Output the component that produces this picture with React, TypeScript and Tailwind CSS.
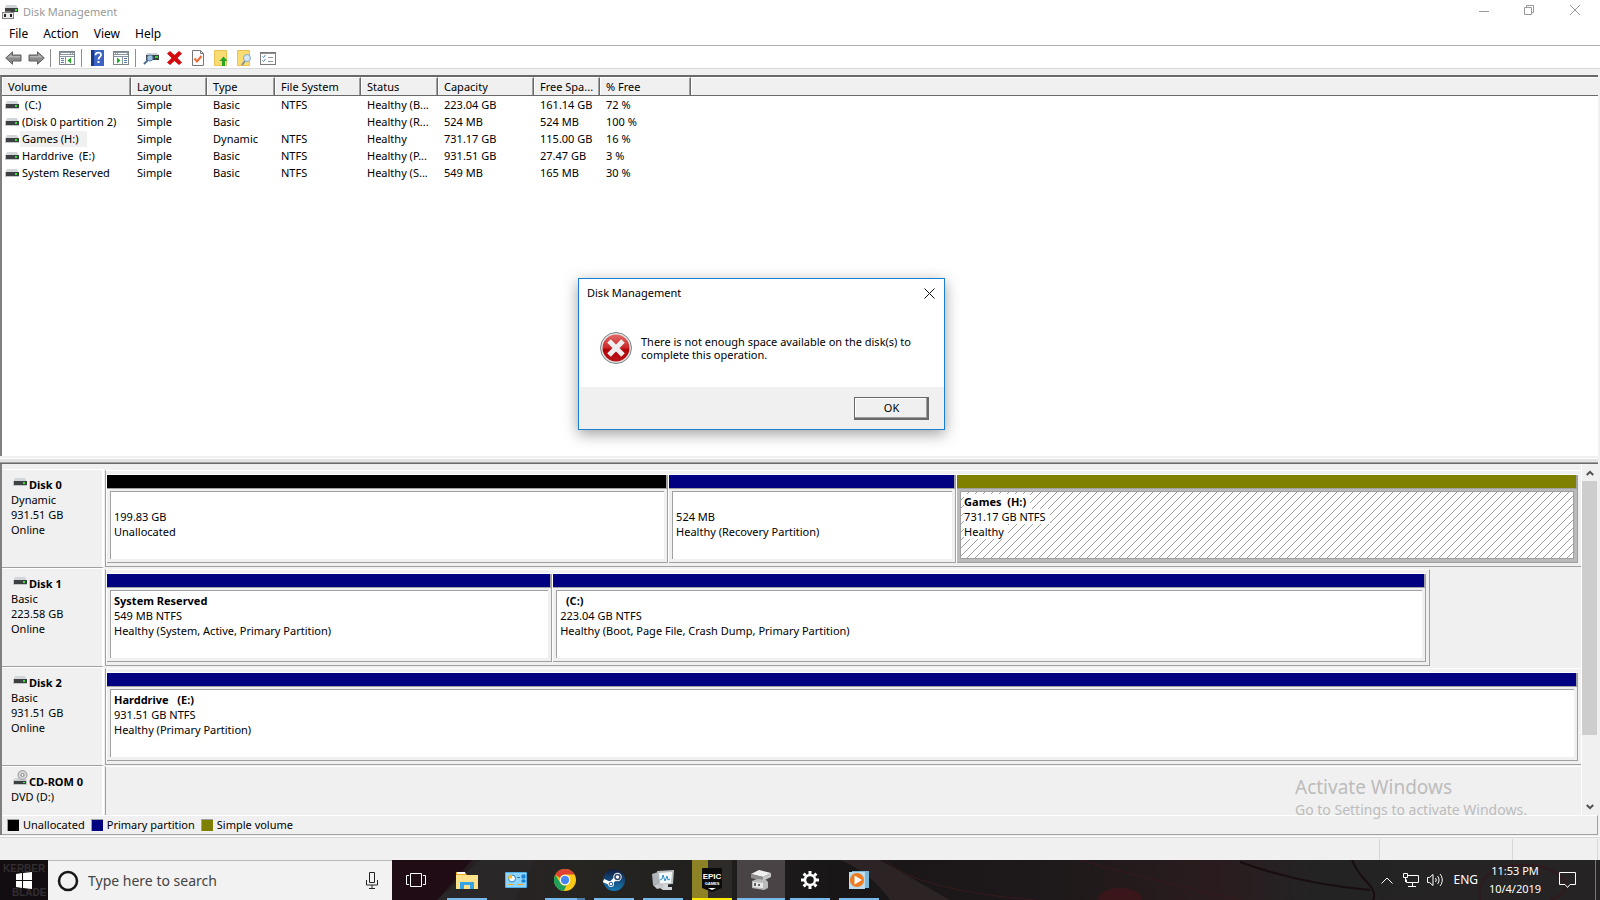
import React from "react";

const columns = [
  { title: "Volume", width: "w-[129px]" },
  { title: "Layout", width: "w-[76px]" },
  { title: "Type", width: "w-[68px]" },
  { title: "File System", width: "w-[86px]" },
  { title: "Status", width: "w-[77px]" },
  { title: "Capacity", width: "w-[96px]" },
  { title: "Free Spa...", width: "w-[66px]" },
  { title: "% Free", width: "w-[91px]" },
];

const volumes = [
  { name: " (C:)", cells: ["Simple", "Basic", "NTFS", "Healthy (B...", "223.04 GB", "161.14 GB", "72 %"] },
  { name: "(Disk 0 partition 2)", cells: ["Simple", "Basic", "", "Healthy (R...", "524 MB", "524 MB", "100 %"] },
  { name: "Games (H:)", selected: true, cells: ["Simple", "Dynamic", "NTFS", "Healthy", "731.17 GB", "115.00 GB", "16 %"] },
  { name: "Harddrive  (E:)", cells: ["Simple", "Basic", "NTFS", "Healthy (P...", "931.51 GB", "27.47 GB", "3 %"] },
  { name: "System Reserved", cells: ["Simple", "Basic", "NTFS", "Healthy (S...", "549 MB", "165 MB", "30 %"] },
];

const disks = [
  {
    name: "Disk 0",
    info: ["Dynamic", "931.51 GB", "Online"],
    full: true,
    parts: [
      { title: " ", lines: ["199.83 GB", "Unallocated"], bar: "bg-black", grow: "grow-[563]" },
      { title: " ", lines: ["524 MB", "Healthy (Recovery Partition)"], bar: "bg-[#000080]", grow: "grow-[288]" },
      { title: "Games  (H:)", lines: ["731.17 GB NTFS", "Healthy"], bar: "bg-[#808000]", grow: "grow-[623]", selected: true },
    ],
  },
  {
    name: "Disk 1",
    info: ["Basic", "223.58 GB", "Online"],
    full: false,
    parts: [
      { title: "System Reserved", lines: ["549 MB NTFS", "Healthy (System, Active, Primary Partition)"], bar: "bg-[#000080]", grow: "grow-[446]" },
      { title: "  (C:)", lines: ["223.04 GB NTFS", "Healthy (Boot, Page File, Crash Dump, Primary Partition)"], bar: "bg-[#000080]", grow: "grow-[874]" },
    ],
  },
  {
    name: "Disk 2",
    info: ["Basic", "931.51 GB", "Online"],
    full: true,
    parts: [
      { title: "Harddrive   (E:)", lines: ["931.51 GB NTFS", "Healthy (Primary Partition)"], bar: "bg-[#000080]", grow: "grow" },
    ],
  },
];

const legend = [
  { label: "Unallocated", color: "bg-black" },
  { label: "Primary partition", color: "bg-[#000080]" },
  { label: "Simple volume", color: "bg-[#808000]" },
];

const DriveIcon = () => (
  <svg width="14" height="8" viewBox="0 0 14 8" className="shrink-0">
    <path d="M2 0h10l2 4H0z" fill="#d3d6d9" />
    <rect y="3" width="14" height="5" fill="#c3c6c9" />
    <rect x="1" y="3" width="13" height="4" fill="#3c4043" />
    <rect x="10" y="4" width="2" height="2" fill="#2fe62f" />
  </svg>
);

const CdIcon = () => (
  <svg width="15" height="15" viewBox="0 0 15 15" className="shrink-0">
    <path d="M2 8h10l2 3H0z" fill="#d3d6d9" />
    <circle cx="9.500" cy="5" r="4.500" fill="#d4d4d4" stroke="#9c9c9c" />
    <circle cx="9.500" cy="5" r="1.500" fill="#fff" stroke="#8a8a8a" />
    <rect y="10" width="14" height="5" fill="#c3c6c9" />
    <rect x="1" y="11" width="12" height="3" fill="#3c4043" />
    <rect x="10" y="12" width="2" height="1" fill="#3df53d" />
  </svg>
);

const AppIcon = () => (
  <svg width="16" height="16" viewBox="0 0 16 16">
    <path d="M4 1h10l2 3H3z" fill="#d0d3d6" />
    <rect x="3" y="4" width="13" height="4" fill="#3c4043" />
    <rect x="13" y="5" width="2" height="2" fill="#3df53d" />
    <rect x="3" y="7" width="6" height="2" fill="#777" />
    <rect x="0" y="8" width="12" height="7" fill="#858585" />
    <rect x="1" y="9" width="10" height="5" fill="#ececec" />
    <rect x="2" y="10" width="2" height="3" fill="#222" />
    <rect x="8" y="10" width="2" height="3" fill="#222" />
  </svg>
);

const ArrowIcon = ({ flip = false }: { flip?: boolean }) => (
  <svg width="17" height="14" viewBox="0 0 17 14" className={flip ? "-scale-x-100" : ""}>
    <path d="M.7 7 7.500.8V4H16v6H7.500v3.200z" fill="#8b8b8b" stroke="#5f5f5f" />
    <path d="M2.500 6.500 6.500 3v2H15v1.500z" fill="#b4b4b4" />
  </svg>
);

const PaneIcon = ({ flip = false }: { flip?: boolean }) => (
  <svg width="16" height="14" viewBox="0 0 16 14" className={flip ? "-scale-x-100" : ""}>
    <rect x=".5" y=".5" width="15" height="13" fill="#fff" stroke="#7d848b" />
    <path d="M1 1h14v3H1z" fill="#8b959f" />
    <path d="M2 2.500h9M12 2.500h1M14 2.500h1" stroke="#fff" />
    <path d="M1 5.500h14M6.500 5v8" stroke="#8b959f" />
    <path d="M2 7.500h3M2 9.500h3M2 11.500h3" stroke="#5a7ba0" />
    <path d="M12 6.500v6L8.500 9.500z" fill="#1fae1f" />
  </svg>
);

const HelpIcon = () => (
  <svg width="13" height="16" viewBox="0 0 13 16">
    <rect width="13" height="16" fill="#3c62c4" />
    <rect width="3" height="16" fill="#1d3888" />
    <path d="M4.500 5.200c0-3.600 5.500-3.200 5.500-.3 0 2-2.500 2.200-2.500 4.600" fill="none" stroke="#fff" strokeWidth="1.800" />
    <rect x="6.500" y="11" width="2" height="2" fill="#fff" />
  </svg>
);

const ScanIcon = () => (
  <svg width="16" height="14" viewBox="0 0 16 14">
    <path d="M4 2h10l2 2H3z" fill="#cfd2d5" />
    <rect x="3" y="4" width="13" height="5" fill="#3c4043" />
    <rect x="12" y="5" width="3" height="2" fill="#2edc2e" />
    <path d="m1 13 4-4" stroke="#4b6d8e" strokeWidth="2" />
    <circle cx="7" cy="7" r="3" fill="#9dc1de" stroke="#557da3" />
  </svg>
);

const DeleteIcon = () => (
  <svg width="15" height="14" viewBox="0 0 15 14">
    <path d="m0 2.500 3-2.500 4.500 4L12 0l3 2.500L10.500 7l4.500 4.500-3 2.500-4.500-4L3 14l-3-2.500L4.500 7z" fill="#d4070c" />
  </svg>
);

const CheckPageIcon = () => (
  <svg width="12" height="16" viewBox="0 0 12 16">
    <path d="M.5.5h8l3 3v12H.5z" fill="#fbfbfb" stroke="#777" />
    <path d="M8.500.5v3h3" fill="none" stroke="#777" />
    <path d="m2.500 8.500 2.500 3L9.500 6" fill="none" stroke="#ef6a32" strokeWidth="2" />
  </svg>
);

const FolderUpIcon = () => (
  <svg width="14" height="16" viewBox="0 0 14 16">
    <path d="M.5.500h12v15H.5z" fill="#fbdc72" stroke="#e8c252" />
    <path d="M9.500 6.500 13.500 11H11v5H8v-5H5.500z" fill="#28a428" />
  </svg>
);

const FolderFindIcon = () => (
  <svg width="15" height="16" viewBox="0 0 15 16">
    <path d="M.5.500h12v15H.5z" fill="#fbdc72" stroke="#e8c252" />
    <path d="m5 15 3-4" stroke="#87919b" strokeWidth="2" />
    <circle cx="10" cy="8" r="3.500" fill="#d4e8f7" stroke="#8aa9c4" />
  </svg>
);

const ListIcon = () => (
  <svg width="16" height="13" viewBox="0 0 16 13">
    <rect x=".5" y=".5" width="15" height="12" fill="#fff" stroke="#7c7c7c" />
    <path d="M1 1.500h14" stroke="#8c8c8c" />
    <path d="m2.500 4.500 1 1 2-2.500M2.500 8.500l1 1 2-2.500" fill="none" stroke="#3a86d0" />
    <path d="M8 5.500h5M8 9.500h5" stroke="#999" />
  </svg>
);

const Separator = () => <span className="h-[18px] w-px bg-[#8f8f8f]" />;

const ToolButton = ({ label, children }: { label: string; children: React.ReactNode }) => (
  <button aria-label={label} className="flex h-5 w-[23px] items-center justify-center">
    {children}
  </button>
);

const TitleBar = () => (
  <header className="flex h-6 items-center bg-white pl-[2px] text-[#999]">
    <AppIcon />
    <h1 className="ml-[5px] grow">Disk Management</h1>
    <button aria-label="Minimize" className="flex h-full w-[45px] items-center justify-center pb-[3px]">
      <svg width="10" height="10" viewBox="0 0 10 10"><path d="M0 5.500h10" stroke="#999" /></svg>
    </button>
    <button aria-label="Restore" className="flex h-full w-[46px] items-center justify-center pb-1">
      <svg width="10" height="10" viewBox="0 0 10 10" fill="none" stroke="#999">
        <path d="M.5 2.500h7v7h-7zM2.500 2.500v-2h7v7h-2" />
      </svg>
    </button>
    <button aria-label="Close" className="mr-[2px] flex h-full w-[46px] items-center justify-center pb-1">
      <svg width="10" height="10" viewBox="0 0 10 10"><path d="m0 0 10 10M10 0 0 10" stroke="#999" /></svg>
    </button>
  </header>
);

const MenuBar = () => (
  <nav className="flex h-[22px] items-start gap-[15px] border-b border-[#b0b0b8] bg-white pl-[9px] text-xs leading-5">
    {["File", "Action", "View", "Help"].map((item) => (
      <button key={item}>{item}</button>
    ))}
  </nav>
);

const Toolbar = () => (
  <div className="flex h-[23px] items-end border-b border-[#d9d9d9] bg-white pl-[2px]">
    <ToolButton label="Back"><ArrowIcon /></ToolButton>
    <ToolButton label="Forward"><ArrowIcon flip /></ToolButton>
    <span className="mr-1 ml-[2px] flex pb-px"><Separator /></span>
    <ToolButton label="Show console tree"><PaneIcon /></ToolButton>
    <span className="mr-1 ml-[3px] flex pb-px"><Separator /></span>
    <ToolButton label="Help"><HelpIcon /></ToolButton>
    <ToolButton label="Show action pane"><PaneIcon flip /></ToolButton>
    <span className="mx-[3px] flex pb-px"><Separator /></span>
    <ToolButton label="Rescan disks"><ScanIcon /></ToolButton>
    <div className="ml-px flex">
      <ToolButton label="Delete"><DeleteIcon /></ToolButton>
      <ToolButton label="Check"><CheckPageIcon /></ToolButton>
      <ToolButton label="Open"><FolderUpIcon /></ToolButton>
    </div>
    <div className="ml-px flex">
      <ToolButton label="Explore"><FolderFindIcon /></ToolButton>
      <ToolButton label="Properties"><ListIcon /></ToolButton>
    </div>
  </div>
);

const VolumeTable = () => (
  <section className="mt-[6px] mr-[2px] min-h-[100px] grow border-t-2 border-l-2 border-t-[#696969] border-l-[#808080] bg-white">
    <table className="w-full table-fixed border-separate border-spacing-0 text-left">
      <thead>
        <tr className="h-[19px] bg-[#f0f0f0] leading-4">
          {columns.map((col) => (
            <th
              key={col.title}
              className={`${col.width} border-t border-r border-b border-t-white border-r-[#696969] border-b-[#696969] p-0 pl-[6px] font-normal whitespace-nowrap shadow-[inset_-1px_0_#a0a0a0,inset_1px_0_#fff]`}
            >
              {col.title}
            </th>
          ))}
          <th className="border-t border-b border-t-white border-b-[#696969] p-0 shadow-[inset_1px_0_#fff]" />
        </tr>
      </thead>
      <tbody>
        {volumes.map((volume) => (
          <tr key={volume.name} className="h-[17px] leading-4">
            <td className="p-0 pl-[3px]">
              <div className="flex items-center whitespace-pre">
                <DriveIcon />
                <span className={volume.selected ? "ml-px bg-[#f0f0f0] pr-2 pl-[2px]" : "pl-[3px]"}>{volume.name}</span>
              </div>
            </td>
            {volume.cells.map((cell, i) => (
              <td key={i} className="p-0 pl-[6px] whitespace-nowrap">{cell}</td>
            ))}
            <td />
          </tr>
        ))}
      </tbody>
    </table>
  </section>
);

type Part = { title: string; lines: string[]; bar: string; grow: string; selected?: boolean };

const Partition = ({ part }: { part: Part }) => (
  <div className={`${part.grow} flex basis-0 flex-col border-t border-l border-white`}>
    <div className={`${part.bar} h-[14px] shrink-0 border-r-2 border-b border-[#a0a0a0]`} />
    <div
      className={`grow border-r border-b border-[#a0a0a0] px-[3px] pt-[2px] pb-[3px] ${part.selected ? "bg-[#bababa]" : "bg-[#f0f0f0]"}`}
    >
      <div
        className={
          part.selected
            ? "flex h-full flex-col items-start border border-[#a0a0a0] bg-white bg-[linear-gradient(135deg,#a0a0a0_5%,transparent_5%,transparent_45%,#a0a0a0_45%,#a0a0a0_55%,transparent_55%,transparent_95%,#a0a0a0_95%)] bg-[size:8px_8px] pt-[2px] pl-[3px] leading-[15px]"
            : "flex h-full flex-col items-start border-t border-l border-[#a0a0a0] bg-white pt-[2px] pl-[3px] leading-[15px]"
        }
      >
        <strong className={part.selected ? "bg-white pr-1 whitespace-pre" : "whitespace-pre"}>{part.title}</strong>
        {part.lines.map((line) => (
          <span key={line} className={part.selected ? "bg-white pr-1" : ""}>{line}</span>
        ))}
      </div>
    </div>
  </div>
);

const DiskMap = () => (
  <section className="mr-[2px] border-l-2 border-[#808080]">
    <div className="flex h-[351px]">
      <div className="flex min-w-0 grow flex-col overflow-hidden border-r border-white pt-[5px]">
        {disks.map((disk) => (
          <div key={disk.name} className="flex h-[99px] shrink-0">
            <div className="mr-px w-[102px] shrink-0 border-t border-r-2 border-b border-t-white border-r-white border-b-[#a0a0a0] pt-[7px] pl-[9px] leading-[15px]">
              <h2 className="flex items-start gap-[2px] pl-[2px] font-bold">
                <span className="pt-px"><DriveIcon /></span>
                {disk.name}
              </h2>
              {disk.info.map((line) => (
                <p key={line}>{line}</p>
              ))}
            </div>
            <div className="flex min-w-0 grow border-b border-[#f0f0f0]">
              <div
                className={`mt-px flex grow-[1324] basis-0 border-t border-b border-l border-t-white border-b-[#a0a0a0] border-l-[#a0a0a0] py-[3px] pr-[3px] ${disk.full ? "" : "border-r border-r-[#a0a0a0]"}`}
              >
                {disk.parts.map((part) => (
                  <Partition key={part.title + part.lines[0]} part={part} />
                ))}
              </div>
              {!disk.full && <div className="grow-[152] basis-0" />}
            </div>
          </div>
        ))}
        <div className="flex grow">
          <div className="mr-px w-[102px] shrink-0 border-t border-r-2 border-white pt-[3px] pl-[9px] leading-[15px]">
            <h2 className="flex items-start gap-px pl-[2px] font-bold">
              <CdIcon />
              <span className="pt-1">CD-ROM 0</span>
            </h2>
            <p>DVD (D:)</p>
          </div>
          <div className="grow border-t border-l border-t-white border-l-[#a0a0a0]" />
        </div>
      </div>
      <div className="flex w-4 flex-col pr-px">
        <button aria-label="Scroll up" className="flex h-[17px] items-center justify-center">
          <svg width="8" height="6" viewBox="0 0 8 6"><path d="m.8 5 3.200-3.200L7.200 5" fill="none" stroke="#505050" strokeWidth="2" /></svg>
        </button>
        <div className="h-[254px] bg-[#cdcdcd]" />
        <button aria-label="Scroll down" className="mt-auto flex h-[17px] items-center justify-center">
          <svg width="8" height="6" viewBox="0 0 8 6"><path d="m.8 1 3.200 3.200L7.200 1" fill="none" stroke="#505050" strokeWidth="2" /></svg>
        </button>
      </div>
    </div>
    <ul className="flex h-5 items-center gap-[6px] border-t border-r border-b border-t-white border-r-[#a0a0a0] border-b-[#a0a0a0] pl-[5px]">
      {legend.map((item) => (
        <li key={item.label} className="flex items-center gap-1">
          <span className={`${item.color} size-3 border-t border-l border-[#a0a0a0]`} />
          {item.label}
        </li>
      ))}
    </ul>
  </section>
);

const ErrorDialog = () => (
  <div
    role="alertdialog"
    aria-label="Disk Management"
    className="absolute top-[278px] left-[578px] w-[367px] border border-[#1a7fd1] bg-white shadow-[0_4px_14px_rgba(0,0,0,0.38)]"
  >
    <div className="flex h-7 items-center justify-between pl-2">
      <h2>Disk Management</h2>
      <button aria-label="Close" className="flex h-full w-[30px] items-center justify-center">
        <svg width="11" height="11" viewBox="0 0 11 11"><path d="m.5.5 10 10M10.500.5l-10 10" stroke="#111" /></svg>
      </button>
    </div>
    <div className="flex h-20 items-start gap-[9px] pt-[25px] pl-[21px]">
      <svg width="32" height="32" viewBox="0 0 32 32" className="shrink-0">
        <defs>
          <linearGradient id="err" x1="0" y1="0" x2="0" y2="1">
            <stop offset="0" stopColor="#e26a66" />
            <stop offset=".5" stopColor="#c9282a" />
            <stop offset=".55" stopColor="#b30509" />
            <stop offset="1" stopColor="#b81418" />
          </linearGradient>
        </defs>
        <circle cx="16" cy="16" r="15.500" fill="#e4e4e4" stroke="#7b8585" />
        <circle cx="16" cy="16" r="13.500" fill="url(#err)" />
        <path d="m9 9 14 14M23 9 9 23" stroke="#eee" strokeWidth="5" />
      </svg>
      <p className="w-[275px] pt-[3px] leading-[13px] whitespace-nowrap">
        There is not enough space available on the disk(s) to<br />complete this operation.
      </p>
    </div>
    <div className="flex h-[42px] items-start justify-end bg-[#f0f0f0] pt-[10px] pr-[15px]">
      <button className="h-[23px] w-[75px] border border-[#696969] shadow-[inset_-1px_-1px_#696969,inset_-2px_-2px_#a0a0a0,inset_1px_1px_#fff]">
        OK
      </button>
    </div>
  </div>
);

const ExplorerIcon = () => (
  <svg width="22" height="19" viewBox="0 0 22 19">
    <path d="M0 1h9l2 3h10v14H0z" fill="#e8a91d" />
    <path d="M1 1h8v2H1z" fill="#fff" />
    <path d="M0 4h22v14H0z" fill="#fce08a" />
    <path d="M4 18v-7h14v7h-4v-4H8v4z" fill="#35a4e4" />
  </svg>
);

const ControlPanelIcon = () => (
  <svg width="22" height="16" viewBox="0 0 22 16">
    <rect width="22" height="16" rx="1" fill="#4fb0ea" />
    <rect x="1" y="1" width="20" height="14" fill="#8fd4fb" />
    <circle cx="7" cy="6.500" r="3.500" fill="#fff" stroke="#1d82cf" />
    <path d="M7 6.500V2.500a4 4 0 0 0-4 4z" fill="#f7b733" />
    <path d="M12 5.500h3M17 3h3v3h-3zM17 8h3v2h-3z" fill="#1d82cf" stroke="#1d82cf" />
    <path d="M3 12.500h6M12 12.500h7" stroke="#f7a823" />
  </svg>
);

const ChromeIcon = () => (
  <svg width="22" height="22" viewBox="0 0 22 22">
    <circle cx="11" cy="11" r="11" fill="#fbc916" />
    <path d="M11 0a11 11 0 0 1 9.600 5.600H11a5.400 5.400 0 0 0-5 3.400L1.400 5.500A11 11 0 0 1 11 0z" fill="#df4132" />
    <path d="M1.400 5.500 6 13.500a5.400 5.400 0 0 0 6.500 2.800L9.800 22A11 11 0 0 1 1.400 5.500z" fill="#1fa05a" />
    <circle cx="11" cy="11" r="5.200" fill="#fff" />
    <circle cx="11" cy="11" r="4.200" fill="#4587f2" />
  </svg>
);

const SteamIcon = () => (
  <svg width="22" height="22" viewBox="0 0 22 22">
    <defs>
      <linearGradient id="steam" x1="0" y1="0" x2="0" y2="1">
        <stop offset="0" stopColor="#121b3d" />
        <stop offset="1" stopColor="#1879b5" />
      </linearGradient>
    </defs>
    <circle cx="11" cy="11" r="11" fill="url(#steam)" />
    <path d="m.5 11.500 6.500 3M7 15l7-7" stroke="#fff" strokeWidth="3.500" />
    <circle cx="14.500" cy="8" r="4.200" fill="#fff" />
    <circle cx="14.500" cy="8" r="2.500" fill="none" stroke="#31476f" strokeWidth="1.500" />
    <circle cx="8" cy="15" r="3" fill="#fff" />
    <circle cx="8" cy="15" r="1.800" fill="none" stroke="#2a5a8c" />
  </svg>
);

const MonitorIcon = () => (
  <svg width="24" height="22" viewBox="0 0 24 22">
    <path d="m1 5 6-2 1 12-6 1z" fill="#aeb4b8" />
    <path d="m2 16 9-2 3 4-8 2z" fill="#c7cacc" />
    <path d="m6 2 17-1-1 14-14 1z" fill="#b9bec1" />
    <path d="m8 4 13-1-1 11-11 .5z" fill="#f4f8fa" />
    <path d="m9 11 2-1 1-4 2 6 2-5 1 4 2-1" fill="none" stroke="#2c8ecf" />
    <path d="M12 15h5v3h4v3h-9l-3-2 3-1z" fill="#d2d5d7" />
  </svg>
);

const EpicIcon = () => (
  <svg width="20" height="24" viewBox="0 0 20 24">
    <path d="M0 1a1 1 0 0 1 1-1h18a1 1 0 0 1 1 1v19l-10 4-10-4z" fill="#0b0b0b" />
    <text x="10" y="11" fill="#fff" fontSize="8" fontWeight="700" textAnchor="middle" fontFamily="Liberation Sans Narrow, Liberation Sans, sans-serif">EPIC</text>
    <text x="10" y="17" fill="#fff" fontSize="4" fontWeight="700" textAnchor="middle" fontFamily="Liberation Sans, sans-serif">GAMES</text>
    <path d="M6 20h8l-4 2z" fill="#fff" />
  </svg>
);

const DiskTaskIcon = () => (
  <svg width="24" height="20" viewBox="0 0 24 20">
    <path d="m2 4 8-4 12 3-8 4z" fill="#f0f0f0" />
    <path d="m2 4 12 3v4L2 8z" fill="#8c8c8c" />
    <path d="m14 7 8-4v4l-8 4z" fill="#c6c6c6" />
    <path d="m3 11 5-2 9 1 2 2v6l-4 2-12-2z" fill="#b9b9b9" />
    <path d="m4 12 10 1v5L4 17z" fill="#e8e8e8" />
    <path d="M6 13v3M10 14v2" stroke="#333" strokeWidth="1.500" />
  </svg>
);

const GearIcon = () => (
  <svg width="18" height="18" viewBox="0 0 18 18" fill="none" stroke="#fff">
    <circle cx="9" cy="9" r="5" strokeWidth="2.500" />
    <path d="M9 0v3M9 15v3M0 9h3M15 9h3M2.600 2.600l2.200 2.200M13.200 13.200l2.200 2.200M2.600 15.400l2.200-2.200M13.200 4.800l2.200-2.200" strokeWidth="3" />
  </svg>
);

const MediaIcon = () => (
  <svg width="20" height="18" viewBox="0 0 20 18">
    <path d="M3 0h17v17H3z" fill="#7fb6d6" />
    <path d="M0 1h16v17H0z" fill="#b9dcee" />
    <circle cx="8" cy="9" r="7" fill="#ee7a1d" />
    <path d="m5.500 4.500 7.500 4.500-7.500 4.500z" fill="#fff" />
  </svg>
);

const tasks = [
  { label: "File Explorer", icon: <ExplorerIcon />, line: "bg-[#76b9ed]", back: "" },
  { label: "Control Panel", icon: <ControlPanelIcon />, line: "", back: "" },
  { label: "Google Chrome", icon: <ChromeIcon />, line: "bg-[linear-gradient(90deg,#76b9ed_80%,#4e7ea6_80%)]", back: "" },
  { label: "Steam", icon: <SteamIcon />, line: "bg-[#76b9ed]", back: "" },
  { label: "Resource Monitor", icon: <MonitorIcon />, line: "bg-[#76b9ed]", back: "" },
  { label: "Epic Games", icon: <EpicIcon />, line: "bg-[#ffeb00]", back: "bg-[linear-gradient(90deg,#8d8326_40%,#2e2a28_40%)]" },
  { label: "Disk Management", icon: <DiskTaskIcon />, line: "bg-[#76b9ed]", back: "bg-[#4a4346]", active: true },
  { label: "Settings", icon: <GearIcon />, line: "bg-[#76b9ed]", back: "" },
  { label: "Media Player", icon: <MediaIcon />, line: "bg-[#76b9ed]", back: "" },
];

// wallpaper showing faintly through the taskbar
const TaskbarArt = () => (
  <svg className="absolute inset-0 size-full" viewBox="0 0 1600 40" preserveAspectRatio="none" fill="none">
    <path d="M392 0h80l-35 40h-45z" fill="#1f0c14" />
    <path d="M437 40 480 0h55l-20 40z" fill="#2a2729" />
    <path d="M840 0q30 12 50 40h60L880 0z" fill="#2b2324" />
    <path d="M885 0q30 30 150 40M1080 0q70 20 160 40" stroke="#38191d" />
    <path d="M1240 2q60 22 130 28M1352 0q5 12 15 22t6 18" stroke="#190d10" strokeWidth="2" />
    <ellipse cx="1120" cy="40" rx="22" ry="12" fill="#3a161b" />
    <path d="M1480 40q-4-30 30-34t50 10-10 24" stroke="#301a1d" strokeWidth="2" />
  </svg>
);

const Taskbar = () => (
  <footer className="relative h-10 shrink-0 bg-[linear-gradient(90deg,#140a0e_0,#140a0e_24%,#272123_30%,#262522_36%,#21201e_44%,#191617_52%,#1e191a_66%,#2a1c1e_76%,#242324_82%,#262324_100%)] text-white">
    <TaskbarArt />
    <div className="relative flex h-full">
      <button aria-label="Start" className="flex w-12 items-center justify-center bg-[#120d10]">
        <svg width="48" height="40" viewBox="0 0 48 40">
          <g fill="#322e32" fontFamily="Liberation Sans, sans-serif" fontWeight="700">
            <text x="3" y="12" fontSize="10">KERBER</text>
            <text x="12" y="36" fontSize="10">BLADE</text>
          </g>
          <path d="m16 14 6-1v7h-6zM23 13l9-1v8h-9zM16 21h6v7l-6-1zM23 21h9v8l-9-1z" fill="#fff" />
        </svg>
      </button>
      <label className="flex w-[344px] items-center border-t border-[#b9b9b9] bg-[#f2f2f2] pr-[14px] pl-[9px]">
        <svg width="22" height="22" viewBox="0 0 22 22" className="mr-[9px] shrink-0">
          <circle cx="11" cy="11" r="9" fill="none" stroke="#161616" strokeWidth="2.500" />
        </svg>
        <input
          type="text"
          aria-label="Search"
          placeholder="Type here to search"
          className="min-w-0 grow bg-transparent text-sm text-[#444] outline-none placeholder:text-[#444]"
        />
        <svg width="12" height="17" viewBox="0 0 12 17" fill="none" stroke="#222">
          <path d="M3.500.5h5v10h-5zM.500 8v5h11V8M6 13v3.500M3 16.500h6" />
        </svg>
      </label>
      <button aria-label="Task view" className="mr-[2px] flex w-12 items-center justify-center">
        <svg width="20" height="14" viewBox="0 0 20 14" fill="none" stroke="#fff">
          <path d="M4.500.5h11v13h-11zM3 2.500H.5v9H3M17 2.500h2.500v9H17" />
        </svg>
      </button>
      {tasks.map((task) => (
        <button key={task.label} aria-label={task.label} className="flex w-[49px] justify-center">
          <span className={`${task.back} ${task.active ? "w-12" : "w-10"} flex h-full flex-col items-center`}>
            <span className="flex grow items-center pt-[2px]">{task.icon}</span>
            <span className={`${task.line} h-[2px] w-full`} />
          </span>
        </button>
      ))}
      <div className="ml-auto flex items-center">
        <button aria-label="Show hidden icons" className="mr-[10px]">
          <svg width="12" height="7" viewBox="0 0 12 7"><path d="m.5 6.500 5.500-5.500 5.500 5.500" fill="none" stroke="#fff" /></svg>
        </button>
        <svg width="16" height="14" viewBox="0 0 16 14" fill="none" stroke="#fff" className="mr-2">
          <path d="M4.500 2.500h11v7h-12v-3M9.500 10v3M5 13.500h8M.500.5h4v4h-4zM2.500 4v5" />
        </svg>
        <svg width="17" height="14" viewBox="0 0 17 14" fill="none" stroke="#fff" className="mr-[9px]">
          <path d="M.5 4.500h2L6 1.500v11l-3.500-3h-2zM8.500 5c1 1.500 1 2.500 0 4M10.500 3c2 2.500 2 5.500 0 8M13 1c3 3.500 3 8.500 0 12" />
        </svg>
        <span className="mr-[10px] text-xs">ENG</span>
        <div className="mr-[17px] w-[54px] text-center leading-[18px] whitespace-nowrap">
          <p>11:53 PM</p>
          <p>10/4/2019</p>
        </div>
        <button aria-label="Notifications" className="mr-[19px]">
          <svg width="17" height="17" viewBox="0 0 17 17"><path d="M.5.500h16v12H11L8.500 15.500 6 12.500H.5z" fill="none" stroke="#fff" /></svg>
        </button>
        <span className="mr-1 h-10 w-px bg-[#777]" />
      </div>
    </div>
  </footer>
);

export default function App() {
  return (
    <div className="relative flex h-screen flex-col overflow-hidden bg-[#f0f0f0] font-['Noto_Sans','Open_Sans',sans-serif] text-[11px] text-black">
      <TitleBar />
      <MenuBar />
      <Toolbar />
      <VolumeTable />
      <div className="mr-[2px] h-2 shrink-0 border-t-2 border-b border-t-[#f0f0f0] border-b-[#696969] bg-[#e3e3e3] shadow-[inset_0_1px_#fff,inset_0_-1px_#a0a0a0]" />
      <DiskMap />
      <div className="mt-[2px] flex h-[23px] shrink-0 justify-end border-t border-[#d7d7d7] pt-px pr-[2px] shadow-[0_-1px_#fff]">
        <span className="w-[133px] border-l border-[#d7d7d7]" />
        <span className="w-[86px] border-r border-l border-[#d7d7d7]" />
      </div>
      <Taskbar />
      <ErrorDialog />
      <div className="pointer-events-none absolute right-[69px] bottom-[80px] w-[236px] whitespace-nowrap text-[#bcbcbc]">
        <p className="text-[19px] leading-[26px]">Activate Windows</p>
        <p className="text-sm leading-5">Go to Settings to activate Windows.</p>
      </div>
    </div>
  );
}
